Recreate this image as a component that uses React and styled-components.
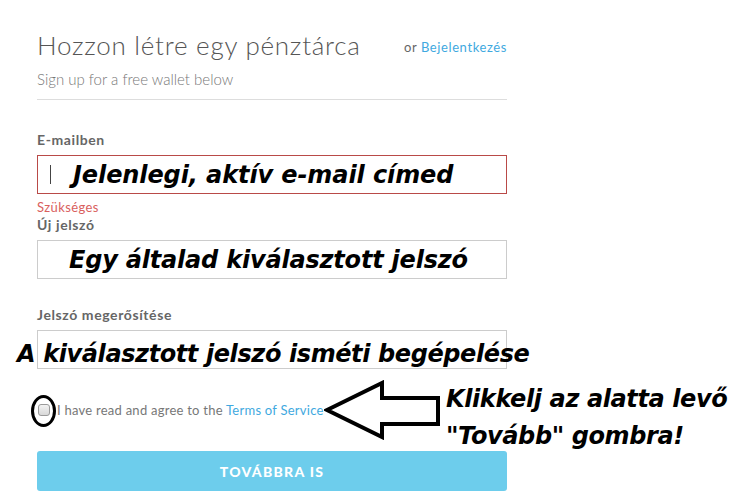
import React from 'react';
import styled, { createGlobalStyle } from 'styled-components';

const GlobalStyle = createGlobalStyle`
  html, body {
    margin: 0;
    padding: 0;
    background: #ffffff;
  }
  body {
    font-family: "Lato", "Open Sans", sans-serif;
    color: #555;
  }
`;

const Page = styled.div`
  width: 470px;
  padding: 30px 0 0 37px;
`;

const Header = styled.div`
  display: flex;
  justify-content: space-between;
  align-items: flex-start;
`;

const Title = styled.h1`
  margin: 0;
  font-size: 26px;
  line-height: 31px;
  font-weight: 300;
  color: #555;
  letter-spacing: 0.75px;
`;

const LoginHint = styled.div`
  margin-top: 9px;
  font-size: 13px;
  line-height: 16px;
  color: #666;
  letter-spacing: 0.6px;
`;

const Link = styled.a`
  color: #3fa9e0;
  text-decoration: none;
`;

const Subtitle = styled.p`
  margin: 9px 0 0;
  font-size: 15px;
  font-weight: 300;
  color: #777;
`;

const Divider = styled.hr`
  margin: 11px 0 0;
  border: 0;
  border-top: 1px solid #ddd;
`;

const Form = styled.form`
  display: flex;
  flex-direction: column;
  padding-top: 32px;
`;

const Field = styled.div`
  display: flex;
  flex-direction: column;
  margin-bottom: ${p => p.$gap}px;
`;

const Label = styled.label`
  font-size: 14px;
  line-height: 16px;
  font-weight: 700;
  letter-spacing: 0.6px;
  color: #666;
  margin-bottom: 7px;
`;

const InputWrap = styled.div`
  position: relative;
`;

const Input = styled.div`
  box-sizing: border-box;
  height: 39px;
  border: 1px solid ${p => (p.$error ? '#b94a48' : '#ccc')};
  padding-left: 12px;
  display: flex;
  align-items: center;
`;

const Caret = styled.span`
  width: 1px;
  height: 19px;
  background: #444;
`;

const ErrorText = styled.div`
  margin-top: 5px;
  font-size: 13px;
  line-height: 16px;
  letter-spacing: 0.4px;
  color: #d9605d;
`;

const Note = styled.span`
  position: absolute;
  left: ${p => p.$left}px;
  top: ${p => p.$top}px;
  white-space: nowrap;
  font-family: "Comic Sans MS", "DejaVu Sans", sans-serif;
  font-weight: bold;
  font-style: italic;
  font-size: 24px;
  line-height: 1;
  letter-spacing: ${p => p.$spacing || 0}px;
  color: #000;
`;

const CheckRow = styled.div`
  position: relative;
  display: flex;
  align-items: center;
  gap: 7px;
  height: 16px;
  padding-left: 1px;
  margin-top: 33px;
  font-size: 13px;
  letter-spacing: 0.25px;
  color: #777;
`;

const Check = styled.input`
  appearance: none;
  margin: 0;
  width: 12px;
  height: 12px;
  border: 1px solid #9a9a9a;
  border-radius: 3px;
  background: linear-gradient(#f2f2f2, #d8d8d8);
`;

const Ring = styled.span`
  position: absolute;
  left: -6px;
  top: -7px;
  box-sizing: border-box;
  width: 25px;
  height: 32px;
  border: 3.5px solid #000;
  border-radius: 50%;
`;

const Arrow = styled.svg`
  position: absolute;
  left: 287px;
  top: -22px;
`;

const Instruction = styled.div`
  position: absolute;
  left: 409px;
  top: -21px;
  font-family: "Comic Sans MS", "DejaVu Sans", sans-serif;
  font-weight: bold;
  font-style: italic;
  font-size: 24px;
  line-height: 37px;
  letter-spacing: -0.4px;
  color: #000;
  white-space: nowrap;
`;

const Submit = styled.button`
  margin-top: 33px;
  height: 40px;
  border: 0;
  border-radius: 3px;
  background: #6dcdec;
  color: #fff;
  font-family: "Lato", sans-serif;
  font-weight: 900;
  font-size: 14px;
  letter-spacing: 1.3px;
`;

export default function App() {
  return (
    <>
      <GlobalStyle />
      <Page>
        <Header>
          <Title>Hozzon létre egy pénztárca</Title>
          <LoginHint>
            or <Link href="#">Bejelentkezés</Link>
          </LoginHint>
        </Header>
        <Subtitle>Sign up for a free wallet below</Subtitle>
        <Divider />
        <Form>
          <Field $gap={2}>
            <Label>E-mailben</Label>
            <InputWrap>
              <Input $error>
                <Caret />
              </Input>
              <Note $left={36} $top={8} $spacing={-0.1}>Jelenlegi, aktív e-mail címed</Note>
            </InputWrap>
            <ErrorText>Szükséges</ErrorText>
          </Field>
          <Field $gap={28}>
            <Label>Új jelszó</Label>
            <InputWrap>
              <Input />
              <Note $left={32} $top={8} $spacing={-0.2}>Egy általad kiválasztott jelszó</Note>
            </InputWrap>
          </Field>
          <Field $gap={0}>
            <Label>Jelszó megerősítése</Label>
            <InputWrap>
              <Input />
              <Note $left={-20} $top={12} $spacing={-0.4}>A kiválasztott jelszó isméti begépelése</Note>
            </InputWrap>
          </Field>
          <CheckRow>
            <Check type="checkbox" />
            <span>
              I have read and agree to the <Link href="#">Terms of Service</Link>
            </span>
            <Ring />
            <Arrow width="118" height="60" viewBox="0 0 118 60">
              <polygon
                points="3,30 58,3 58,18 114,18 114,44 58,44 58,57"
                fill="#fff"
                stroke="#000"
                strokeWidth="4"
                strokeLinejoin="miter"
              />
            </Arrow>
            <Instruction>
              Klikkelj az alatta levő
              <br />
              "Tovább" gombra!
            </Instruction>
          </CheckRow>
          <Submit type="button">TOVÁBBRA IS</Submit>
        </Form>
      </Page>
    </>
  );
}
